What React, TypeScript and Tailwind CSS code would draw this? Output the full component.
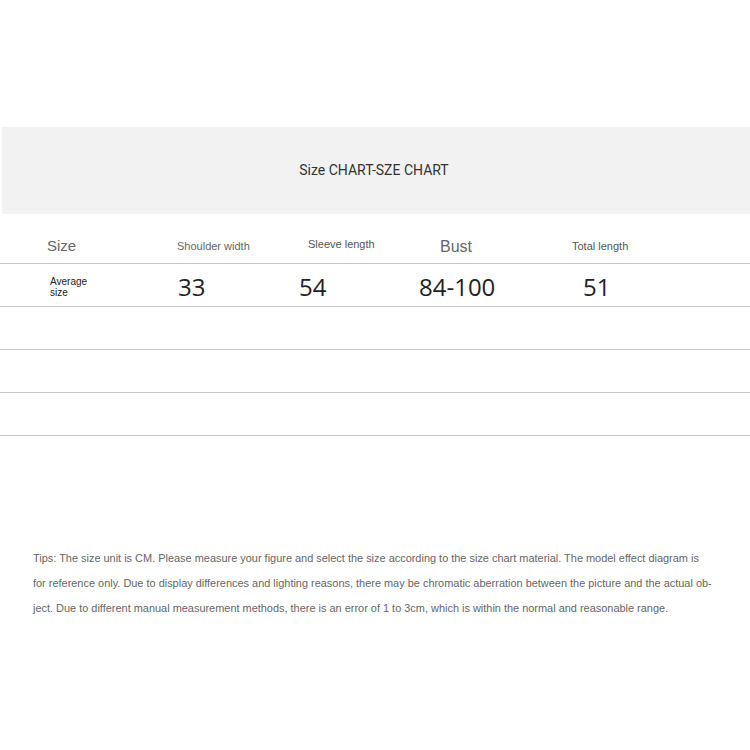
const headers = [
  { label: "Size", cls: "pl-[47px] text-[15px] text-[#666]" },
  { label: "Shoulder width", cls: "pl-[46px] text-[11px] text-[#666]" },
  { label: "Sleeve length", cls: "pl-[46px] text-[11px] text-[#555] -translate-y-[2px]" },
  { label: "Bust", cls: "pl-[47px] text-[16px] text-[#666]" },
  { label: "Total length", cls: "pl-[48px] text-[11px] text-[#555]" },
  { label: "", cls: "" },
]

const values = [
  { label: "33", cls: "pl-[47px]" },
  { label: "54", cls: "pl-[37px]" },
  { label: "84-100", cls: "pl-[26px]" },
  { label: "51", cls: "pl-[59px]" },
  { label: "", cls: "" },
]

const cols = "grid grid-cols-[131px_131px_131px_131px_132px_1fr]"

export default function App() {
  return (
    <div className="h-[750px] w-[750px] bg-white font-['Liberation_Sans',Arial,sans-serif]">
      <div className="h-[127px]" />

      <div className="ml-[2px] flex h-[87px] items-center justify-center bg-[#f2f2f2] pr-[4px]">
        <span className="font-['Roboto',sans-serif] text-[14px] text-[#333]">Size CHART-SZE CHART</span>
      </div>

      <div className={`${cols} h-[50px] items-center border-b border-[#c4c4c4] pt-[16px]`}>
        {headers.map((h, i) => (
          <div key={i} className={`whitespace-nowrap ${h.cls}`}>
            {h.label}
          </div>
        ))}
      </div>

      <div className={`${cols} h-[43px] items-center border-b border-[#c4c4c4] pt-[4px]`}>
        <div className="pl-[50px] text-[10px] leading-[11px] text-[#222]">
          Average
          <br />
          size
        </div>
        {values.map((v, i) => (
          <div key={i} className={`font-['Open_Sans',sans-serif] text-[24px] text-[#222] ${v.cls}`}>
            {v.label}
          </div>
        ))}
      </div>

      {[0, 1, 2].map((r) => (
        <div key={r} className="h-[43px] border-b border-[#c4c4c4]" />
      ))}

      <div className="pl-[33px] pt-[110px] text-[10.95px] leading-[25px] text-[#666]">
        <p>
          Tips: The size unit is CM. Please measure your figure and select the size according to the size chart material. The model effect diagram is
        </p>
        <p>
          for reference only. Due to display differences and lighting reasons, there may be chromatic aberration between the picture and the actual ob-
        </p>
        <p>ject. Due to different manual measurement methods, there is an error of 1 to 3cm, which is within the normal and reasonable range.</p>
      </div>
    </div>
  )
}
